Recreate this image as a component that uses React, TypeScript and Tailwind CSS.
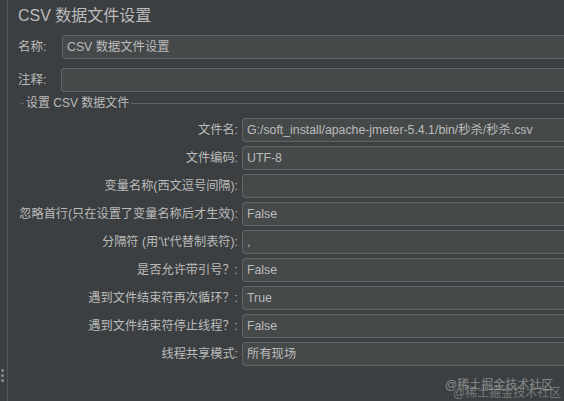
import React from 'react';

const font = { fontFamily: '"Liberation Sans", "Noto Sans CJK SC", sans-serif' };

const rows: { label: string; value: string }[] = [
  { label: '文件名:', value: 'G:/soft_install/apache-jmeter-5.4.1/bin/秒杀/秒杀.csv' },
  { label: '文件编码:', value: 'UTF-8' },
  { label: '变量名称(西文逗号间隔):', value: '' },
  { label: '忽略首行(只在设置了变量名称后才生效):', value: 'False' },
  { label: "分隔符 (用'\\t'代替制表符):", value: ',' },
  { label: '是否允许带引号？:', value: 'False' },
  { label: '遇到文件结束符再次循环？:', value: 'True' },
  { label: '遇到文件结束符停止线程？:', value: 'False' },
  { label: '线程共享模式:', value: '所有现场' },
];

const Field: React.FC<{ value: string }> = ({ value }) => (
  <div className="flex-1 -mr-4 h-[24px] rounded-[3px] border border-[#646464] bg-[#45494a] pl-[4px] flex items-center text-[12.3px] text-[#bbbbbb] whitespace-nowrap">
    {value}
  </div>
);

const App: React.FC = () => {
  return (
    <div className="w-[564px] h-[401px] bg-[#3c3f41] flex overflow-hidden relative text-[#bbbbbb]" style={font}>
      {/* splitter handle */}
      <div className="w-[7px] flex flex-col items-start pl-[1px] pt-[369px] gap-[2px]">
        <span className="w-[3px] h-[3px] rounded-full bg-[#8a8c8e]" />
        <span className="w-[3px] h-[3px] rounded-full bg-[#8a8c8e]" />
        <span className="w-[3px] h-[3px] rounded-full bg-[#8a8c8e]" />
      </div>
      <div className="w-px bg-[#55585a]" />

      <div className="flex-1 pl-[10px] flex flex-col min-w-0">
        <h1 className="pt-[6px] text-[16px] leading-[20px] text-[#bbbbbb]">CSV 数据文件设置</h1>

        <div className="mt-[9px] flex items-center">
          <span className="w-[44px] text-[12.5px]">名称:</span>
          <Field value="CSV 数据文件设置" />
        </div>
        <div className="mt-[9px] flex items-center">
          <span className="w-[43px] text-[12.5px]">注释:</span>
          <Field value="" />
        </div>

        {/* titled border */}
        <div className="mt-[4px] ml-[2px] h-[14px] flex items-center">
          <div className="w-[4px] h-px bg-[#5e6163]" />
          <span className="px-[2px] text-[12px] leading-[14px] whitespace-nowrap">设置 CSV 数据文件</span>
          <div className="flex-1 h-px bg-[#5e6163]" />
        </div>

        <div className="mt-[8px] flex flex-col gap-[4px]">
          {rows.map((r) => (
            <div key={r.label} className="flex items-center">
              <span className="w-[221px] pr-[1px] text-right text-[12.2px] whitespace-nowrap">{r.label}</span>
              <span className="w-[3px]" />
              <Field value={r.value} />
            </div>
          ))}
        </div>
      </div>

      {/* watermark */}
      <div className="absolute left-[445px] top-[377px] text-[12px] leading-[16px] text-white/40 whitespace-nowrap">@稀土掘金技术社区</div>
      <div className="absolute left-[453px] top-[385px] text-[12px] leading-[16px] text-white/30 whitespace-nowrap">@稀土掘金技术社区</div>
    </div>
  );
};

export default App;
